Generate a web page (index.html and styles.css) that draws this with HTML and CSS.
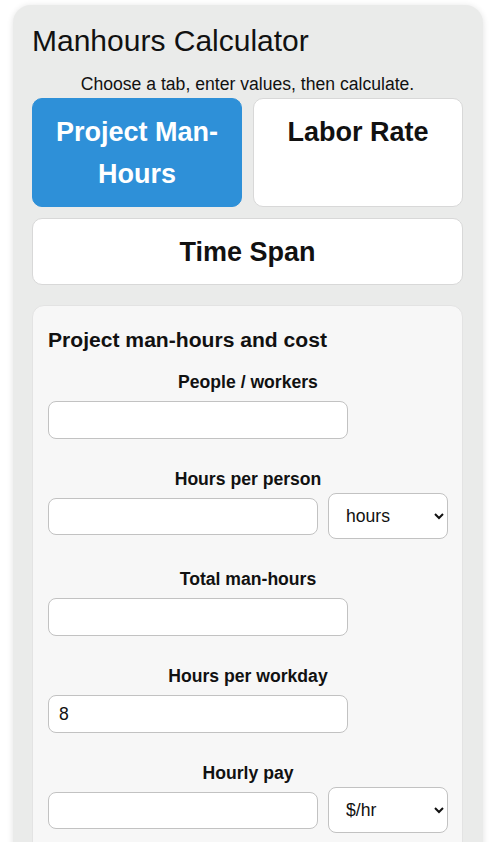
FILE: index.html
```html
<!DOCTYPE html>
<html lang="en">
<head>
<meta charset="utf-8">
<title>Manhours Calculator</title>
<link rel="stylesheet" href="styles.css">
</head>
<body>
<main class="app">
  <h1 class="title">Manhours Calculator</h1>
  <p class="intro">Choose a tab, enter values, then calculate.</p>
  <div class="tabs">
    <button class="tab tab-active" type="button">Project Man-Hours</button>
    <button class="tab" type="button">Labor Rate</button>
    <button class="tab tab-wide" type="button">Time Span</button>
  </div>
  <section class="card">
    <h2 class="card-title">Project man-hours and cost</h2>
    <div class="field">
      <label class="label">People / workers</label>
      <input class="input input-single" type="text">
    </div>
    <div class="field">
      <label class="label label-row">Hours per person</label>
      <div class="row">
        <input class="input input-grow" type="text">
        <select class="select"><option>hours</option></select>
      </div>
    </div>
    <div class="field">
      <label class="label">Total man-hours</label>
      <input class="input input-single" type="text">
    </div>
    <div class="field">
      <label class="label">Hours per workday</label>
      <input class="input input-single" type="text" value="8">
    </div>
    <div class="field">
      <label class="label label-row">Hourly pay</label>
      <div class="row">
        <input class="input input-grow" type="text">
        <select class="select"><option>$/hr</option></select>
      </div>
    </div>
  </section>
</main>
</body>
</html>
```

FILE: styles.css
```css
html, body {
  margin: 0;
  padding: 0;
  background: #ffffff;
}

body {
  font-family: "Liberation Sans", Arial, sans-serif;
  color: #111111;
}

.app {
  margin: 5px 19px 0 13px;
  padding: 19px 20px 40px 19px;
  background: #eaebea;
  border-radius: 18px 18px 0 0;
  box-shadow: 0 1px 6px rgba(0, 0, 0, 0.12);
}

.title {
  margin: 0;
  font-size: 30px;
  font-weight: 400;
  line-height: 34px;
}

.intro {
  margin: 16px 0 4px;
  font-size: 17.6px;
  line-height: 20px;
  text-align: center;
}

.tabs {
  display: grid;
  grid-template-columns: 1fr 1fr;
  gap: 11px;
}

.tab {
  font-family: "Liberation Sans", Arial, sans-serif;
  font-size: 27px;
  font-weight: 700;
  line-height: 42px;
  color: #111111;
  background: #ffffff;
  border: 1px solid #d8d8d8;
  border-radius: 10px;
  padding: 11.5px 10px;
  text-align: center;
  display: flex;
  justify-content: center;
  align-items: flex-start;
}

.tab-active {
  background: #2e90d8;
  border-color: #2e90d8;
  color: #ffffff;
}

.tab-wide {
  grid-column: 1 / span 2;
}

.card {
  margin-top: 20px;
  background: #f7f7f7;
  border: 1px solid #e3e3e3;
  border-radius: 12px;
  padding: 21px 14px 20px 15px;
}

.card-title {
  margin: 0 0 20px;
  font-size: 21.1px;
  font-weight: 700;
  line-height: 25px;
}

.field {
  margin-bottom: 30px;
}

.label {
  display: block;
  margin-bottom: 9px;
  font-size: 17.6px;
  font-weight: 700;
  line-height: 20px;
  text-align: center;
}

.label-row {
  margin-bottom: 4px;
}

.input {
  box-sizing: border-box;
  height: 38px;
  padding: 0 10px;
  border: 1px solid #c2c2c2;
  border-radius: 8px;
  background: #ffffff;
  font-family: "Liberation Sans", Arial, sans-serif;
  font-size: 17.6px;
  color: #111111;
  display: block;
}

.input-single {
  width: 300px;
}

.row {
  display: flex;
  align-items: center;
  gap: 10px;
}

.input-grow {
  flex: 1 1 auto;
  min-width: 0;
  height: 37px;
}

.select {
  box-sizing: border-box;
  flex: 0 0 120px;
  width: 120px;
  height: 46px;
  padding: 0 4px 0 13px;
  border: 1px solid #c2c2c2;
  border-radius: 8px;
  background: #ffffff;
  font-family: "Liberation Sans", Arial, sans-serif;
  font-size: 17.6px;
  color: #111111;
}
```
